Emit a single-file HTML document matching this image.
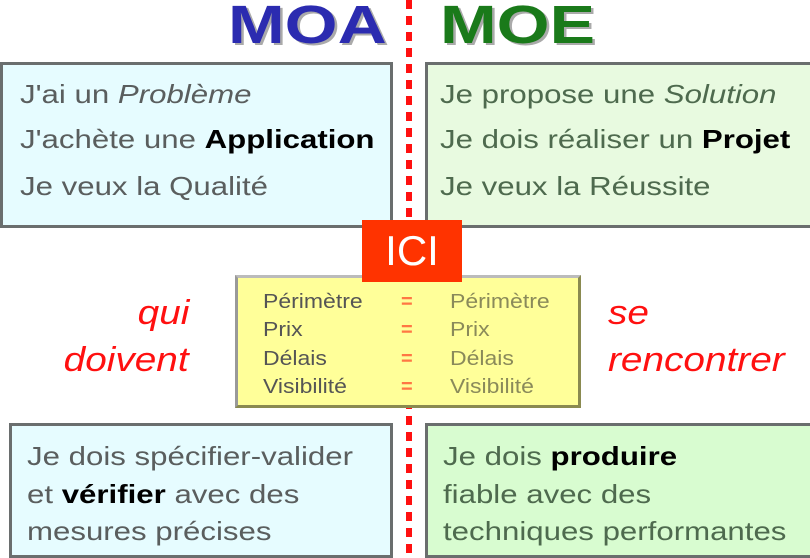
<!DOCTYPE html>
<html><head><meta charset="utf-8"><style>
body{margin:0;width:810px;height:558px;background:#fff;position:relative;overflow:hidden;font-family:"Liberation Sans",Arial,sans-serif}
.a{position:absolute}
.box{position:absolute;box-sizing:border-box;border:3px solid #6a6e6e}
.t{position:absolute;font-size:26px;color:#5a5e5e;white-space:nowrap;transform:scaleX(1.2);transform-origin:0 0}
.g{color:#4e6a4e}
b{color:#000}
.r{position:absolute;font-size:34px;color:#ff1010;font-style:italic;white-space:nowrap;transform:scaleX(1.14)}
.y{position:absolute;font-size:20px;color:#555;white-space:nowrap;transform:scaleX(1.15);transform-origin:0 0}
.y2{color:#8a8a5a}
.eq{position:absolute;font-size:20px;color:#ff7744;font-weight:bold}
</style></head><body>
<div class="a" style="left:228px;top:-6px;font-size:54px;font-weight:bold;color:#2b2bb0;text-shadow:2px 2px 0 #aaa;transform:scaleX(1.26);transform-origin:0 0">MOA</div>
<div class="a" style="left:440px;top:-6px;font-size:54px;font-weight:bold;color:#1a7a1a;text-shadow:2px 2px 0 #aaa;transform:scaleX(1.26);transform-origin:0 0">MOE</div>
<div class="a" style="left:406px;top:0;width:6px;height:558px;background:repeating-linear-gradient(#ff1010 0 9px,#fff 9px 16px)"></div>
<div class="box" style="left:0;top:62px;width:393px;height:166px;background:#e6fcff"></div>
<div class="box" style="left:425px;top:62px;width:390px;height:166px;background:#e8fae0"></div>
<div class="t" style="left:20px;top:79px">J'ai un <i>Problème</i></div>
<div class="t" style="left:20px;top:124px">J'achète une <b>Application</b></div>
<div class="t" style="left:20px;top:171px">Je veux la Qualité</div>
<div class="t g" style="left:440px;top:79px">Je propose une <i>Solution</i></div>
<div class="t g" style="left:440px;top:124px">Je dois réaliser un <b>Projet</b></div>
<div class="t g" style="left:440px;top:171px">Je veux la Réussite</div>
<div class="a" style="left:235px;top:275px;width:346px;height:133px;box-sizing:border-box;background:#ffff99;border:3px solid #8a8a50;border-left-color:#999;border-top-color:#bbb"></div>
<div class="a" style="left:362px;top:220px;width:100px;height:62px;background:#ff3300;color:#fff;font-size:42px;text-align:center;line-height:62px">ICI</div>
<div class="y" style="left:263px;top:291px">Périmètre</div>
<div class="y" style="left:263px;top:319px">Prix</div>
<div class="y" style="left:263px;top:348px">Délais</div>
<div class="y" style="left:263px;top:376px">Visibilité</div>
<div class="eq" style="left:401px;top:291px">=</div>
<div class="eq" style="left:401px;top:319px">=</div>
<div class="eq" style="left:401px;top:348px">=</div>
<div class="eq" style="left:401px;top:376px">=</div>
<div class="y y2" style="left:450px;top:291px">Périmètre</div>
<div class="y y2" style="left:450px;top:319px">Prix</div>
<div class="y y2" style="left:450px;top:348px">Délais</div>
<div class="y y2" style="left:450px;top:376px">Visibilité</div>
<div class="r" style="right:621px;top:294px;transform-origin:100% 0">qui</div>
<div class="r" style="right:621px;top:341px;transform-origin:100% 0">doivent</div>
<div class="r" style="left:608px;top:294px;transform-origin:0 0">se</div>
<div class="r" style="left:608px;top:341px;transform-origin:0 0">rencontrer</div>
<div class="box" style="left:9px;top:423px;width:384px;height:135px;background:#e6fcff"></div>
<div class="box" style="left:425px;top:423px;width:390px;height:135px;background:#d8fcd0"></div>
<div class="t" style="left:27px;top:441px">Je dois spécifier-valider</div>
<div class="t" style="left:27px;top:479px">et <b>vérifier</b> avec des</div>
<div class="t" style="left:27px;top:516px">mesures précises</div>
<div class="t g" style="left:443px;top:441px">Je dois <b>produire</b></div>
<div class="t g" style="left:443px;top:479px">fiable avec des</div>
<div class="t g" style="left:443px;top:516px">techniques performantes</div>
</body></html>
